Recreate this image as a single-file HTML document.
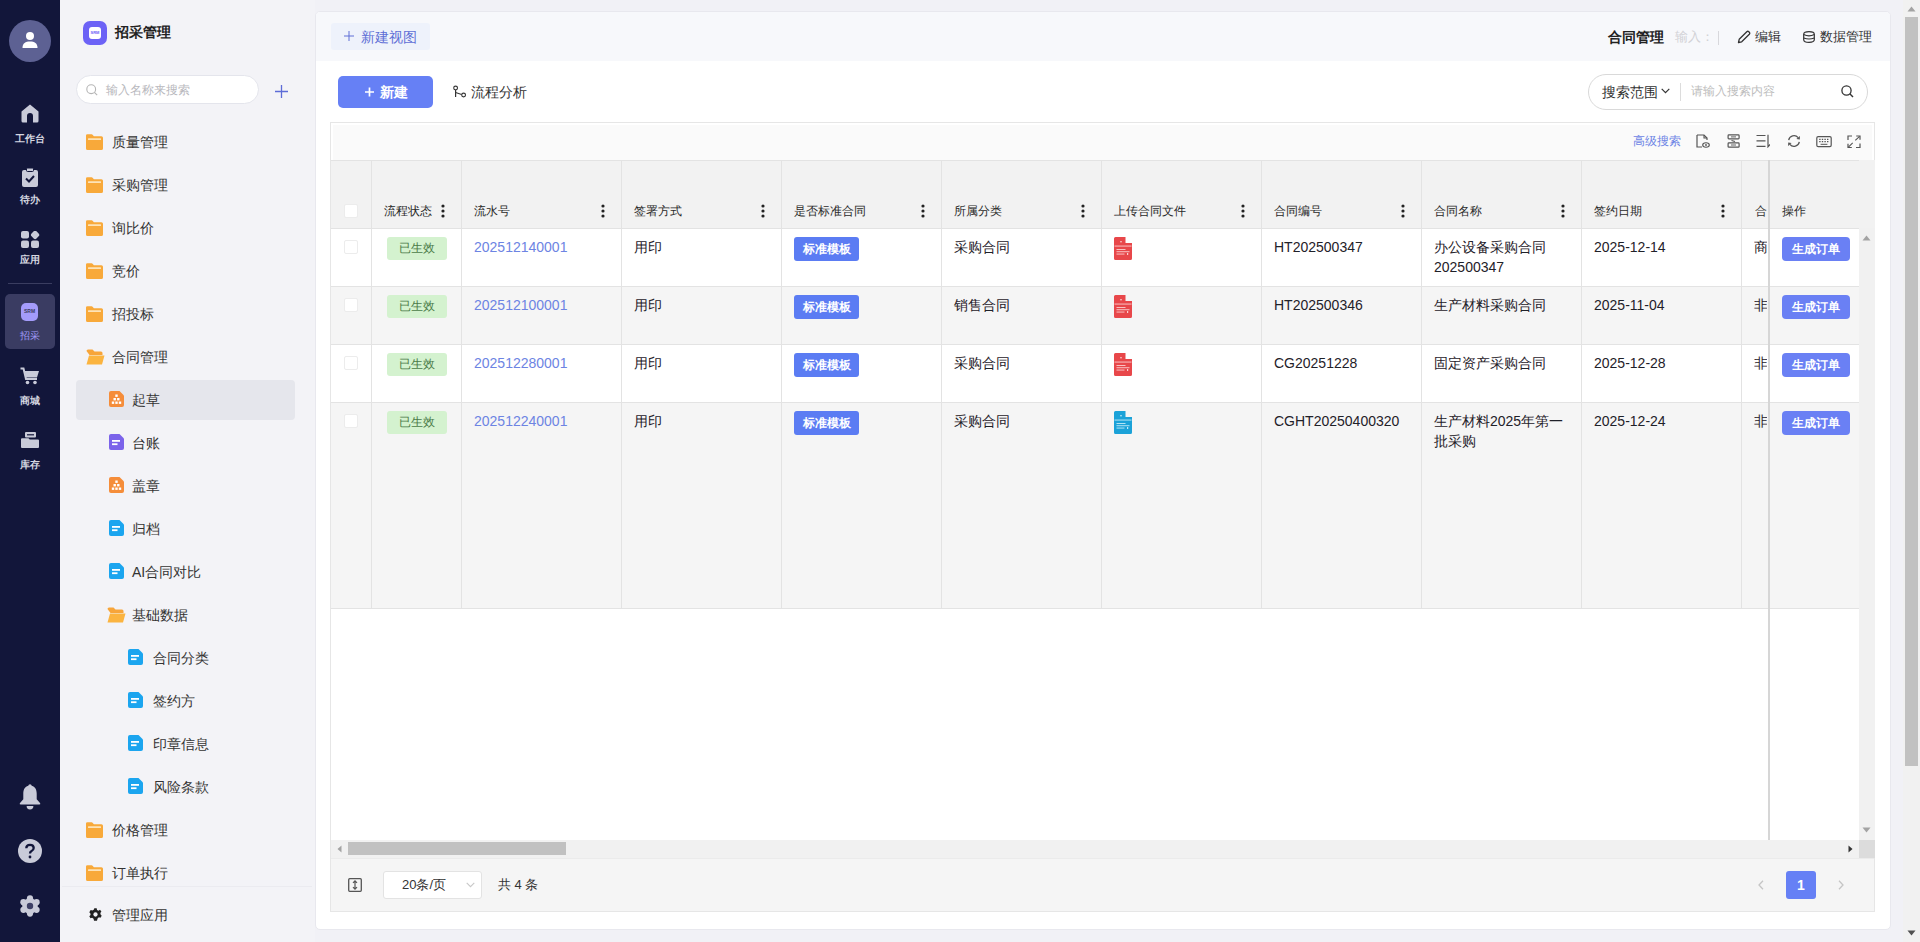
<!DOCTYPE html>
<html><head><meta charset="utf-8">
<style>
*{box-sizing:border-box;margin:0;padding:0}
html,body{width:1920px;height:942px;overflow:hidden}
body{font-family:"Liberation Sans",sans-serif;background:#f1f1f6;position:relative;color:#333}
.abs{position:absolute}
#nav{left:0;top:0;width:60px;height:942px;background:#12163a}
.navlbl{position:absolute;left:0;width:60px;text-align:center;font-size:10px;font-weight:bold;color:#d5d6e0;line-height:12px}
#side{left:60px;top:0;width:255px;height:942px;background:#f3f3f7}
.item{position:absolute;left:0;width:255px;height:20px;font-size:14px;line-height:20px;color:#333}
.item svg{position:absolute}
.item span{position:absolute;top:0}
#card{left:315px;top:11px;width:1575px;height:919px;background:#fff;border:1px solid #e6e6ec;border-radius:10px;overflow:hidden}
#hband{left:0;top:0;width:1575px;height:51px;background:#f7f8fb;border-bottom:1px solid #eff0f5}
#tbl{left:330px;top:122px;width:1545px;height:790px;border:1px solid #ebebeb;background:#fff}
.vl{position:absolute;width:1px;background:#e3e3e3}
.hl{position:absolute;height:1px;background:#e3e3e3}
.th{position:absolute;top:202px;font-size:12px;line-height:18px;color:#2a2a2a}
.dots{position:absolute;top:204px;width:4px;height:14px}
.td{position:absolute;font-size:14px;line-height:20px;color:#1f2129}
.tag{position:absolute;width:60px;height:23px;background:#d4f2cf;color:#4b7b48;font-size:12px;line-height:23px;text-align:center;border-radius:3px}
.btag{position:absolute;width:65px;height:24px;background:#5b7cf3;color:#fff;font-size:12px;font-weight:bold;line-height:24px;text-align:center;border-radius:3px}
.gbtn{position:absolute;left:1782px;width:68px;height:24px;background:#6a80f4;color:#fff;font-size:12px;font-weight:bold;line-height:24px;text-align:center;border-radius:4px}
.link{position:absolute;left:474px;font-size:14px;line-height:20px;color:#6d84e3}
.cb{position:absolute;left:344px;width:14px;height:14px;background:#fff;border:1px solid #ececec;border-radius:2px}
.ticon{position:absolute;top:134px}
</style></head><body>

<!-- left nav -->
<div id="nav" class="abs">
  <div class="abs" style="left:9px;top:20px;width:42px;height:42px;border-radius:50%;background:#5d6193"></div>
  <svg class="abs" style="left:21px;top:31px" width="18" height="18" viewBox="0 0 18 18"><circle cx="9" cy="5" r="4" fill="#fff"/><path d="M1.5 17 C1.5 12 4.5 10.5 9 10.5 C13.5 10.5 16.5 12 16.5 17 Z" fill="#fff"/></svg>

  <svg class="abs" style="left:21px;top:104px" width="18" height="19" viewBox="0 0 18 19"><path d="M9 0.5 L17.5 7.5 V17 Q17.5 18.5 16 18.5 H12 V12 Q12 9 9 9 Q6 9 6 12 V18.5 H2 Q0.5 18.5 0.5 17 V7.5 Z" fill="#c9cbd9"/></svg>
  <div class="navlbl" style="top:133px">工作台</div>

  <svg class="abs" style="left:22px;top:168px" width="16" height="19" viewBox="0 0 16 19"><rect x="0" y="2" width="16" height="17" rx="2" fill="#c9cbd9"/><rect x="4.5" y="0" width="7" height="3.5" rx="1" fill="#c9cbd9" stroke="#12163a" stroke-width="1"/><path d="M4 10.5 L7 13.5 L12 8" stroke="#12163a" stroke-width="2" fill="none"/></svg>
  <div class="navlbl" style="top:194px">待办</div>

  <svg class="abs" style="left:21px;top:231px" width="19" height="17" viewBox="0 0 19 17"><rect x="0" y="0" width="8" height="7.5" rx="2" fill="#c9cbd9"/><rect x="10.6" y="0.4" width="7" height="7" rx="2" transform="rotate(45 14.1 3.9)" fill="#c9cbd9"/><rect x="0" y="9.5" width="8" height="7.5" rx="2" fill="#c9cbd9"/><rect x="10" y="9.5" width="8" height="7.5" rx="2" fill="#c9cbd9"/></svg>
  <div class="navlbl" style="top:254px">应用</div>

  <div class="abs" style="left:8px;top:283px;width:44px;height:1px;background:#3a3d60"></div>
  <div class="abs" style="left:5px;top:294px;width:50px;height:55px;border-radius:5px;background:#3a3c62"></div>
  <div class="abs" style="left:21px;top:303px;width:17px;height:18px;border-radius:5px;background:#a49cfb"></div>
  <div class="abs" style="left:21px;top:308px;width:17px;text-align:center;font-size:5px;font-weight:bold;color:#3a3c62;line-height:7px">SRM</div>
  <div class="navlbl" style="top:330px;color:#9f98f6;font-weight:normal">招采</div>

  <svg class="abs" style="left:20px;top:367px" width="20" height="18" viewBox="0 0 20 18"><path d="M0.5 1.5 H3.5 L6 12 H17" stroke="#c9cbd9" stroke-width="2" fill="none"/><path d="M4.5 4 H19 L17 10.5 H6 Z" fill="#c9cbd9"/><circle cx="7.5" cy="15.5" r="1.8" fill="#c9cbd9"/><circle cx="15" cy="15.5" r="1.8" fill="#c9cbd9"/></svg>
  <div class="navlbl" style="top:395px">商城</div>

  <svg class="abs" style="left:21px;top:432px" width="18" height="16" viewBox="0 0 18 16"><rect x="4" y="0" width="11" height="5.5" rx="1" fill="#c9cbd9"/><rect x="6" y="2.2" width="7" height="1.2" fill="#12163a"/><path d="M0 7.2 Q0 6.2 1 6.2 H7.5 L8.7 7.6 H17 Q18 7.6 18 8.6 V15 Q18 16 17 16 H1 Q0 16 0 15 Z" fill="#c9cbd9"/></svg>
  <div class="navlbl" style="top:459px">库存</div>

  <svg class="abs" style="left:19px;top:784px" width="22" height="26" viewBox="0 0 22 26"><circle cx="11" cy="1.8" r="1.6" fill="#c9cbd9"/><path d="M11 1.5 C6.3 1.5 4.3 5.2 4.3 9.5 V15.2 L0.8 19.3 Q0.3 20.6 1.8 20.6 H20.2 Q21.7 20.6 21.2 19.3 L17.7 15.2 V9.5 C17.7 5.2 15.7 1.5 11 1.5 Z" fill="#c9cbd9"/><path d="M7.6 22 A3.4 3.4 0 0 0 14.4 22 Z" fill="#c9cbd9"/></svg>
  <svg class="abs" style="left:18px;top:839px" width="24" height="24" viewBox="0 0 24 24"><circle cx="12" cy="12" r="12" fill="#c9cbd9"/><path d="M8.3 9.2 Q8.3 5.8 12 5.8 Q15.7 5.8 15.7 9 Q15.7 11 13.3 12.2 Q12 12.9 12 14.6" stroke="#12163a" stroke-width="2.3" fill="none"/><circle cx="12" cy="18" r="1.4" fill="#12163a"/></svg>
  <svg class="abs" style="left:19px;top:895px" width="22" height="22" viewBox="0 0 22 22"><g fill="#c9cbd9"><circle cx="11" cy="11" r="7.8"/><circle cx="17.58" cy="14.80" r="3.1"/><circle cx="11.00" cy="18.60" r="3.1"/><circle cx="4.42" cy="14.80" r="3.1"/><circle cx="4.42" cy="7.20" r="3.1"/><circle cx="11.00" cy="3.40" r="3.1"/><circle cx="17.58" cy="7.20" r="3.1"/></g><circle cx="11" cy="11" r="3.2" fill="#3e4066"/></svg>
</div>

<!-- sidebar -->
<div id="side" class="abs">
  <div class="abs" style="left:23px;top:21px;width:24px;height:24px;border-radius:7px;background:#6c62f6"></div>
  <div class="abs" style="left:29px;top:27px;width:12px;height:12px;border-radius:3px;background:#fff"></div>
  <div class="abs" style="left:29px;top:30px;width:12px;text-align:center;font-size:4px;font-weight:bold;color:#6c62f6;line-height:5px">SRM</div>
  <div class="abs" style="left:55px;top:22px;font-size:14px;font-weight:bold;color:#222;line-height:20px">招采管理</div>

  <div class="abs" style="left:16px;top:75px;width:183px;height:29px;border-radius:15px;background:#fff;border:1px solid #e4e5ec"></div>
  <svg class="abs" style="left:26px;top:84px" width="12" height="12" viewBox="0 0 12 12"><circle cx="5.2" cy="5.2" r="4.4" stroke="#b5b5b5" stroke-width="1.1" fill="none"/><path d="M8.4 8.4 L11.2 11.2" stroke="#b5b5b5" stroke-width="1.1"/></svg>
  <div class="abs" style="left:46px;top:82px;font-size:12px;color:#b8b8bd;line-height:17px">输入名称来搜索</div>
  <svg class="abs" style="left:215px;top:85px" width="13" height="13" viewBox="0 0 13 13"><path d="M6.5 0 V13 M0 6.5 H13" stroke="#5d6cd7" stroke-width="1.3"/></svg>

  <div class="abs" style="left:16px;top:380px;width:219px;height:40px;border-radius:4px;background:#e5e6ec"></div>
</div>

<svg class="abs" style="left:86px;top:134px" width="17" height="16" viewBox="0 0 17 16"><path d="M0 1.6 Q0 0.3 1.4 0.3 H5.6 Q6.3 0.3 6.8 0.9 L7.9 2.2 H15.4 Q17 2.2 17 3.8 V14.4 Q17 16 15.4 16 H1.6 Q0 16 0 14.4 Z" fill="#f8a93a"/><rect x="2" y="4.3" width="13" height="1.6" rx="0.5" fill="#fde3b8"/></svg>
<div class="abs" style="left:112px;top:132px;font-size:14px;line-height:20px;color:#333">质量管理</div>
<svg class="abs" style="left:86px;top:177px" width="17" height="16" viewBox="0 0 17 16"><path d="M0 1.6 Q0 0.3 1.4 0.3 H5.6 Q6.3 0.3 6.8 0.9 L7.9 2.2 H15.4 Q17 2.2 17 3.8 V14.4 Q17 16 15.4 16 H1.6 Q0 16 0 14.4 Z" fill="#f8a93a"/><rect x="2" y="4.3" width="13" height="1.6" rx="0.5" fill="#fde3b8"/></svg>
<div class="abs" style="left:112px;top:175px;font-size:14px;line-height:20px;color:#333">采购管理</div>
<svg class="abs" style="left:86px;top:220px" width="17" height="16" viewBox="0 0 17 16"><path d="M0 1.6 Q0 0.3 1.4 0.3 H5.6 Q6.3 0.3 6.8 0.9 L7.9 2.2 H15.4 Q17 2.2 17 3.8 V14.4 Q17 16 15.4 16 H1.6 Q0 16 0 14.4 Z" fill="#f8a93a"/><rect x="2" y="4.3" width="13" height="1.6" rx="0.5" fill="#fde3b8"/></svg>
<div class="abs" style="left:112px;top:218px;font-size:14px;line-height:20px;color:#333">询比价</div>
<svg class="abs" style="left:86px;top:263px" width="17" height="16" viewBox="0 0 17 16"><path d="M0 1.6 Q0 0.3 1.4 0.3 H5.6 Q6.3 0.3 6.8 0.9 L7.9 2.2 H15.4 Q17 2.2 17 3.8 V14.4 Q17 16 15.4 16 H1.6 Q0 16 0 14.4 Z" fill="#f8a93a"/><rect x="2" y="4.3" width="13" height="1.6" rx="0.5" fill="#fde3b8"/></svg>
<div class="abs" style="left:112px;top:261px;font-size:14px;line-height:20px;color:#333">竞价</div>
<svg class="abs" style="left:86px;top:306px" width="17" height="16" viewBox="0 0 17 16"><path d="M0 1.6 Q0 0.3 1.4 0.3 H5.6 Q6.3 0.3 6.8 0.9 L7.9 2.2 H15.4 Q17 2.2 17 3.8 V14.4 Q17 16 15.4 16 H1.6 Q0 16 0 14.4 Z" fill="#f8a93a"/><rect x="2" y="4.3" width="13" height="1.6" rx="0.5" fill="#fde3b8"/></svg>
<div class="abs" style="left:112px;top:304px;font-size:14px;line-height:20px;color:#333">招投标</div>
<svg class="abs" style="left:86px;top:349px" width="19" height="16" viewBox="0 0 19 16"><path d="M0.5 2 Q0.5 0.5 2 0.5 H6.5 L8.5 2.5 H15 Q16.5 2.5 16.5 4 V6 H3.5 Z" fill="#f7a53a"/><path d="M3 6.5 H18.5 L16 15.5 H0.5 Z" fill="#fbb440"/></svg>
<div class="abs" style="left:112px;top:347px;font-size:14px;line-height:20px;color:#333">合同管理</div>
<svg class="abs" style="left:109px;top:391px" width="15" height="16" viewBox="0 0 15 16"><path d="M2 0 H10.5 L15 4.5 V14 Q15 16 13 16 H2 Q0 16 0 14 V2 Q0 0 2 0 Z" fill="#f58d3a"/><rect x="6.3" y="3.5" width="2.4" height="2.4" fill="#fff"/><rect x="4.5" y="7" width="2.4" height="2.4" fill="#fff"/><rect x="8.1" y="7" width="2.4" height="2.4" fill="#fff"/><rect x="2.8" y="10.5" width="2.4" height="2.4" fill="#fff"/><rect x="6.3" y="10.5" width="2.4" height="2.4" fill="#fff"/><rect x="9.8" y="10.5" width="2.4" height="2.4" fill="#fff"/></svg>
<div class="abs" style="left:132px;top:390px;font-size:14px;line-height:20px;color:#333">起草</div>
<svg class="abs" style="left:109px;top:434px" width="15" height="16" viewBox="0 0 15 16"><path d="M2 0 H10.5 L15 4.5 V14 Q15 16 13 16 H2 Q0 16 0 14 V2 Q0 0 2 0 Z" fill="#7b63ea"/><rect x="3" y="6" width="8" height="1.8" fill="#fff"/><rect x="3" y="9.3" width="5.5" height="1.8" fill="#fff"/></svg>
<div class="abs" style="left:132px;top:433px;font-size:14px;line-height:20px;color:#333">台账</div>
<svg class="abs" style="left:109px;top:477px" width="15" height="16" viewBox="0 0 15 16"><path d="M2 0 H10.5 L15 4.5 V14 Q15 16 13 16 H2 Q0 16 0 14 V2 Q0 0 2 0 Z" fill="#f58d3a"/><rect x="6.3" y="3.5" width="2.4" height="2.4" fill="#fff"/><rect x="4.5" y="7" width="2.4" height="2.4" fill="#fff"/><rect x="8.1" y="7" width="2.4" height="2.4" fill="#fff"/><rect x="2.8" y="10.5" width="2.4" height="2.4" fill="#fff"/><rect x="6.3" y="10.5" width="2.4" height="2.4" fill="#fff"/><rect x="9.8" y="10.5" width="2.4" height="2.4" fill="#fff"/></svg>
<div class="abs" style="left:132px;top:476px;font-size:14px;line-height:20px;color:#333">盖章</div>
<svg class="abs" style="left:109px;top:520px" width="15" height="16" viewBox="0 0 15 16"><path d="M2 0 H10.5 L15 4.5 V14 Q15 16 13 16 H2 Q0 16 0 14 V2 Q0 0 2 0 Z" fill="#1ba5ef"/><rect x="3" y="6" width="8" height="1.8" fill="#fff"/><rect x="3" y="9.3" width="5.5" height="1.8" fill="#fff"/></svg>
<div class="abs" style="left:132px;top:519px;font-size:14px;line-height:20px;color:#333">归档</div>
<svg class="abs" style="left:109px;top:563px" width="15" height="16" viewBox="0 0 15 16"><path d="M2 0 H10.5 L15 4.5 V14 Q15 16 13 16 H2 Q0 16 0 14 V2 Q0 0 2 0 Z" fill="#1ba5ef"/><rect x="3" y="6" width="8" height="1.8" fill="#fff"/><rect x="3" y="9.3" width="5.5" height="1.8" fill="#fff"/></svg>
<div class="abs" style="left:132px;top:562px;font-size:14px;line-height:20px;color:#333">AI合同对比</div>
<svg class="abs" style="left:107px;top:607px" width="19" height="16" viewBox="0 0 19 16"><path d="M0.5 2 Q0.5 0.5 2 0.5 H6.5 L8.5 2.5 H15 Q16.5 2.5 16.5 4 V6 H3.5 Z" fill="#f7a53a"/><path d="M3 6.5 H18.5 L16 15.5 H0.5 Z" fill="#fbb440"/></svg>
<div class="abs" style="left:132px;top:605px;font-size:14px;line-height:20px;color:#333">基础数据</div>
<svg class="abs" style="left:128px;top:649px" width="15" height="16" viewBox="0 0 15 16"><path d="M2 0 H10.5 L15 4.5 V14 Q15 16 13 16 H2 Q0 16 0 14 V2 Q0 0 2 0 Z" fill="#1ba5ef"/><rect x="3" y="6" width="8" height="1.8" fill="#fff"/><rect x="3" y="9.3" width="5.5" height="1.8" fill="#fff"/></svg>
<div class="abs" style="left:153px;top:648px;font-size:14px;line-height:20px;color:#333">合同分类</div>
<svg class="abs" style="left:128px;top:692px" width="15" height="16" viewBox="0 0 15 16"><path d="M2 0 H10.5 L15 4.5 V14 Q15 16 13 16 H2 Q0 16 0 14 V2 Q0 0 2 0 Z" fill="#1ba5ef"/><rect x="3" y="6" width="8" height="1.8" fill="#fff"/><rect x="3" y="9.3" width="5.5" height="1.8" fill="#fff"/></svg>
<div class="abs" style="left:153px;top:691px;font-size:14px;line-height:20px;color:#333">签约方</div>
<svg class="abs" style="left:128px;top:735px" width="15" height="16" viewBox="0 0 15 16"><path d="M2 0 H10.5 L15 4.5 V14 Q15 16 13 16 H2 Q0 16 0 14 V2 Q0 0 2 0 Z" fill="#1ba5ef"/><rect x="3" y="6" width="8" height="1.8" fill="#fff"/><rect x="3" y="9.3" width="5.5" height="1.8" fill="#fff"/></svg>
<div class="abs" style="left:153px;top:734px;font-size:14px;line-height:20px;color:#333">印章信息</div>
<svg class="abs" style="left:128px;top:778px" width="15" height="16" viewBox="0 0 15 16"><path d="M2 0 H10.5 L15 4.5 V14 Q15 16 13 16 H2 Q0 16 0 14 V2 Q0 0 2 0 Z" fill="#1ba5ef"/><rect x="3" y="6" width="8" height="1.8" fill="#fff"/><rect x="3" y="9.3" width="5.5" height="1.8" fill="#fff"/></svg>
<div class="abs" style="left:153px;top:777px;font-size:14px;line-height:20px;color:#333">风险条款</div>
<svg class="abs" style="left:86px;top:822px" width="17" height="16" viewBox="0 0 17 16"><path d="M0 1.6 Q0 0.3 1.4 0.3 H5.6 Q6.3 0.3 6.8 0.9 L7.9 2.2 H15.4 Q17 2.2 17 3.8 V14.4 Q17 16 15.4 16 H1.6 Q0 16 0 14.4 Z" fill="#f8a93a"/><rect x="2" y="4.3" width="13" height="1.6" rx="0.5" fill="#fde3b8"/></svg>
<div class="abs" style="left:112px;top:820px;font-size:14px;line-height:20px;color:#333">价格管理</div>
<svg class="abs" style="left:86px;top:865px" width="17" height="16" viewBox="0 0 17 16"><path d="M0 1.6 Q0 0.3 1.4 0.3 H5.6 Q6.3 0.3 6.8 0.9 L7.9 2.2 H15.4 Q17 2.2 17 3.8 V14.4 Q17 16 15.4 16 H1.6 Q0 16 0 14.4 Z" fill="#f8a93a"/><rect x="2" y="4.3" width="13" height="1.6" rx="0.5" fill="#fde3b8"/></svg>
<div class="abs" style="left:112px;top:863px;font-size:14px;line-height:20px;color:#333">订单执行</div>
<div class="abs" style="left:62px;top:886px;width:250px;height:1px;background:#ebebf0"></div>
<svg class="abs" style="left:89px;top:908px" width="13" height="13" viewBox="0 0 22 22"><path d="M9 0.5 H13 L13.6 3.3 L16 4.5 L18.6 3 L21 6 L19.2 8.3 L19.6 11 L21.5 13 L19.5 16.4 L16.7 15.8 L14.5 17.8 L13.5 21.5 H8.5 L7.7 18 L5.3 16.5 L2.5 17.3 L0.5 14 L2.6 11.8 L2.4 9.2 L0.5 7 L2.8 3.5 L5.8 4.4 L8 3 Z" fill="#222"/><circle cx="11" cy="11" r="3.6" fill="#f3f3f7"/></svg>
<div class="abs" style="left:112px;top:905px;font-size:14px;line-height:20px;color:#333">管理应用</div>
<div class="abs" style="left:315px;top:11px;width:1576px;height:919px;background:#fff;border:1px solid #e8e8ee;border-radius:5px;overflow:hidden"><div class="abs" style="left:0;top:0;width:1576px;height:49px;background:#f7f8fb"></div></div>
<div class="abs" style="left:331px;top:23px;width:99px;height:27px;background:#eef2fb;border-radius:3px"></div>
<svg class="abs" style="left:344px;top:31px" width="10" height="10" viewBox="0 0 10 10"><path d="M5 0 V10 M0 5 H10" stroke="#5f6fd6" stroke-width="1"/></svg>
<div class="abs" style="left:361px;top:27px;font-size:14px;line-height:20px;color:#5f6fd6">新建视图</div>
<div class="abs" style="left:1608px;top:27px;font-size:14px;line-height:20px;color:#222;font-weight:bold">合同管理</div>
<div class="abs" style="left:1675px;top:28px;font-size:13px;line-height:18px;color:#d2d2d6">输入：</div>
<div class="abs" style="left:1718px;top:31px;width:1px;height:14px;background:#d8d8dc"></div>
<svg class="abs" style="left:1737px;top:30px" width="14" height="14" viewBox="0 0 14 14"><path d="M1.5 12.5 L2.2 9.3 L9.8 1.7 Q10.8 0.8 11.8 1.7 L12.3 2.2 Q13.2 3.2 12.3 4.2 L4.7 11.8 Z" stroke="#333" stroke-width="1.3" fill="none" stroke-linejoin="round"/></svg>
<div class="abs" style="left:1755px;top:28px;font-size:13px;line-height:18px;color:#333">编辑</div>
<svg class="abs" style="left:1803px;top:31px" width="12" height="12" viewBox="0 0 12 12"><path d="M0.7 3.2 Q0.7 0.7 6 0.7 Q11.3 0.7 11.3 3.2 V8.8 Q11.3 11.3 6 11.3 Q0.7 11.3 0.7 8.8 Z" stroke="#333" stroke-width="1.2" fill="none"/><path d="M0.7 3.6 Q6 6.2 11.3 3.6 M0.7 6.9 Q6 9 11.3 6.9" stroke="#333" stroke-width="1.1" fill="none"/></svg>
<div class="abs" style="left:1820px;top:28px;font-size:13px;line-height:18px;color:#333">数据管理</div>
<div class="abs" style="left:338px;top:76px;width:95px;height:32px;background:#6680f5;border-radius:5px"></div>
<svg class="abs" style="left:364px;top:87px" width="11" height="10" viewBox="0 0 11 10"><path d="M5.5 0.5 V9.5 M1 5 H10" stroke="#fff" stroke-width="1.7"/></svg>
<div class="abs" style="left:380px;top:82px;font-size:14px;line-height:20px;color:#fff;font-weight:bold">新建</div>
<svg class="abs" style="left:452px;top:85px" width="15" height="13" viewBox="0 0 15 13"><circle cx="3.6" cy="3" r="1.9" stroke="#333" stroke-width="1.1" fill="none"/><path d="M3.6 4.9 V12" stroke="#333" stroke-width="1.2"/><path d="M3.6 7.6 L9.6 9.6" stroke="#333" stroke-width="1.1"/><circle cx="11.6" cy="10" r="1.9" stroke="#333" stroke-width="1.1" fill="none"/></svg>
<div class="abs" style="left:471px;top:82px;font-size:14px;line-height:20px;color:#333">流程分析</div>
<div class="abs" style="left:1588px;top:74px;width:280px;height:36px;border:1px solid #d9d9d9;border-radius:18px;background:#fff"></div>
<div class="abs" style="left:1602px;top:82px;font-size:14px;line-height:20px;color:#333">搜索范围</div>
<svg class="abs" style="left:1661px;top:88px" width="9" height="6" viewBox="0 0 9 6"><path d="M0.7 0.8 L4.5 4.6 L8.3 0.8" stroke="#333" stroke-width="1.2" fill="none"/></svg>
<div class="abs" style="left:1680px;top:83px;width:1px;height:18px;background:#dcdcdc"></div>
<div class="abs" style="left:1691px;top:83px;font-size:12px;line-height:17px;color:#bdbdbd">请输入搜索内容</div>
<svg class="abs" style="left:1841px;top:85px" width="13" height="13" viewBox="0 0 13 13"><circle cx="5.5" cy="5.5" r="4.6" stroke="#333" stroke-width="1.3" fill="none"/><path d="M8.8 8.8 L12 12" stroke="#333" stroke-width="1.4"/></svg>
<div class="abs" style="left:330px;top:122px;width:1545px;height:790px;background:#fff;border:1px solid #e6e6e6"></div>
<div class="abs" style="left:333px;top:125px;width:1539px;height:35px;background:#fafafa"></div>
<div class="abs" style="left:1633px;top:133px;font-size:12px;line-height:17px;color:#6d84e5">高级搜索</div>
<svg class="abs" style="left:1696px;top:134px" width="14" height="14" viewBox="0 0 14 14"><path d="M1 1 H8 L11 4 V6" stroke="#555" stroke-width="1.2" fill="none"/><path d="M1 1 V13 H6" stroke="#555" stroke-width="1.2" fill="none"/><path d="M8 1 V4 H11" stroke="#555" stroke-width="1.1" fill="none"/><ellipse cx="10" cy="11" rx="3.3" ry="2.2" stroke="#555" stroke-width="1.1" fill="none"/><circle cx="10" cy="11" r="0.9" fill="#555"/></svg>
<svg class="abs" style="left:1726px;top:134px" width="14" height="14" viewBox="0 0 14 14"><rect x="2.1" y="0.9" width="11" height="4" rx="0.8" stroke="#555" stroke-width="1.2" fill="none"/><rect x="2.1" y="8.9" width="11" height="4.3" rx="0.8" stroke="#555" stroke-width="1.2" fill="none"/><path d="M5 2.9 H10 M5 11 H10" stroke="#555" stroke-width="0.9"/><path d="M5.5 6.4 L9 7.6" stroke="#555" stroke-width="1.1"/></svg>
<svg class="abs" style="left:1756px;top:134px" width="14" height="14" viewBox="0 0 14 14"><path d="M0.5 1.5 H9.5 M0.5 6.8 H9.5 M0.5 12.3 H9.5" stroke="#555" stroke-width="1.2"/><path d="M12 0.8 V12.8 L14 10.5" stroke="#555" stroke-width="1.2" fill="none"/></svg>
<svg class="abs" style="left:1787px;top:134px" width="14" height="14" viewBox="0 0 14 14"><path d="M1.68 6.06 A5.4 5.4 0 0 1 11.14 3.53 M12.32 7.94 A5.4 5.4 0 0 1 2.86 10.47" stroke="#555" stroke-width="1.25" fill="none"/><path d="M12.81 5.52 L12.90 2.05 L9.37 5.01 Z M1.19 8.48 L1.10 11.95 L4.63 8.99 Z" fill="#555"/></svg>
<svg class="abs" style="left:1816px;top:135px" width="16" height="14" viewBox="0 0 16 14"><rect x="0.8" y="1.6" width="14.4" height="10" rx="1.4" stroke="#555" stroke-width="1.2" fill="none"/><path d="M3.2 4.3 H4.6 M5.8 4.3 H7.2 M8.4 4.3 H9.8 M11 4.3 H12.4 M3.2 6.6 H4.6 M5.8 6.6 H7.2 M8.4 6.6 H9.8 M11 6.6 H12.4" stroke="#555" stroke-width="1.2"/><path d="M4.6 9.3 H11.4" stroke="#555" stroke-width="1"/></svg>
<svg class="abs" style="left:1847px;top:135px" width="14" height="14" viewBox="0 0 14 14"><path d="M1 5 V1 H5 M13 8.5 V12.5 H9 M9.2 1 H13 V4.8 M1 8.7 V12.5 H4.8" stroke="#555" stroke-width="1.2" fill="none"/><path d="M8.3 5.4 L12.6 1.4 M5.7 7.9 L1.4 12.1" stroke="#555" stroke-width="1.1"/></svg>
<div class="abs" style="left:331px;top:160px;width:1544px;height:68px;background:#f2f2f2"></div>
<div class="abs" style="left:331px;top:228px;width:1528px;height:58px;background:#fff"></div>
<div class="abs" style="left:331px;top:286px;width:1528px;height:58px;background:#f5f5f5"></div>
<div class="abs" style="left:331px;top:344px;width:1528px;height:58px;background:#fff"></div>
<div class="abs" style="left:331px;top:402px;width:1528px;height:206px;background:#f5f5f5"></div>
<div class="hl" style="left:331px;top:160px;width:1528px"></div>
<div class="hl" style="left:331px;top:228px;width:1528px"></div>
<div class="hl" style="left:331px;top:286px;width:1528px"></div>
<div class="hl" style="left:331px;top:344px;width:1528px"></div>
<div class="hl" style="left:331px;top:402px;width:1528px"></div>
<div class="hl" style="left:331px;top:608px;width:1528px"></div>
<div class="vl" style="left:371px;top:160px;height:448px"></div>
<div class="vl" style="left:461px;top:160px;height:448px"></div>
<div class="vl" style="left:621px;top:160px;height:448px"></div>
<div class="vl" style="left:781px;top:160px;height:448px"></div>
<div class="vl" style="left:941px;top:160px;height:448px"></div>
<div class="vl" style="left:1101px;top:160px;height:448px"></div>
<div class="vl" style="left:1261px;top:160px;height:448px"></div>
<div class="vl" style="left:1421px;top:160px;height:448px"></div>
<div class="vl" style="left:1581px;top:160px;height:448px"></div>
<div class="vl" style="left:1741px;top:160px;height:448px"></div>
<div class="abs" style="left:1768px;top:160px;width:2px;height:680px;background:#d6d6d6"></div>
<div class="abs" style="left:1859px;top:228px;width:16px;height:612px;background:#f1f1f1"></div>
<svg class="abs" style="left:1862px;top:235px" width="9" height="6" viewBox="0 0 9 6"><path d="M0.5 5.5 L4.5 0.5 L8.5 5.5 Z" fill="#a3a3a3"/></svg>
<svg class="abs" style="left:1862px;top:827px" width="9" height="6" viewBox="0 0 9 6"><path d="M0.5 0.5 L4.5 5.5 L8.5 0.5 Z" fill="#a3a3a3"/></svg>
<div class="th" style="left:384px">流程状态</div>
<svg class="dots" style="left:441px" viewBox="0 0 4 14"><circle cx="2" cy="2" r="1.6" fill="#222"/><circle cx="2" cy="7" r="1.6" fill="#222"/><circle cx="2" cy="12" r="1.6" fill="#222"/></svg>
<div class="th" style="left:474px">流水号</div>
<svg class="dots" style="left:601px" viewBox="0 0 4 14"><circle cx="2" cy="2" r="1.6" fill="#222"/><circle cx="2" cy="7" r="1.6" fill="#222"/><circle cx="2" cy="12" r="1.6" fill="#222"/></svg>
<div class="th" style="left:634px">签署方式</div>
<svg class="dots" style="left:761px" viewBox="0 0 4 14"><circle cx="2" cy="2" r="1.6" fill="#222"/><circle cx="2" cy="7" r="1.6" fill="#222"/><circle cx="2" cy="12" r="1.6" fill="#222"/></svg>
<div class="th" style="left:794px">是否标准合同</div>
<svg class="dots" style="left:921px" viewBox="0 0 4 14"><circle cx="2" cy="2" r="1.6" fill="#222"/><circle cx="2" cy="7" r="1.6" fill="#222"/><circle cx="2" cy="12" r="1.6" fill="#222"/></svg>
<div class="th" style="left:954px">所属分类</div>
<svg class="dots" style="left:1081px" viewBox="0 0 4 14"><circle cx="2" cy="2" r="1.6" fill="#222"/><circle cx="2" cy="7" r="1.6" fill="#222"/><circle cx="2" cy="12" r="1.6" fill="#222"/></svg>
<div class="th" style="left:1114px">上传合同文件</div>
<svg class="dots" style="left:1241px" viewBox="0 0 4 14"><circle cx="2" cy="2" r="1.6" fill="#222"/><circle cx="2" cy="7" r="1.6" fill="#222"/><circle cx="2" cy="12" r="1.6" fill="#222"/></svg>
<div class="th" style="left:1274px">合同编号</div>
<svg class="dots" style="left:1401px" viewBox="0 0 4 14"><circle cx="2" cy="2" r="1.6" fill="#222"/><circle cx="2" cy="7" r="1.6" fill="#222"/><circle cx="2" cy="12" r="1.6" fill="#222"/></svg>
<div class="th" style="left:1434px">合同名称</div>
<svg class="dots" style="left:1561px" viewBox="0 0 4 14"><circle cx="2" cy="2" r="1.6" fill="#222"/><circle cx="2" cy="7" r="1.6" fill="#222"/><circle cx="2" cy="12" r="1.6" fill="#222"/></svg>
<div class="th" style="left:1594px">签约日期</div>
<svg class="dots" style="left:1721px" viewBox="0 0 4 14"><circle cx="2" cy="2" r="1.6" fill="#222"/><circle cx="2" cy="7" r="1.6" fill="#222"/><circle cx="2" cy="12" r="1.6" fill="#222"/></svg>
<div class="abs" style="left:1755px;top:202px;width:12px;overflow:hidden;font-size:12px;line-height:18px;color:#333;white-space:nowrap">合同</div>
<div class="th" style="left:1782px">操作</div>
<div class="cb" style="top:204px"></div>
<div class="cb" style="top:240px"></div>
<div class="tag" style="left:387px;top:237px">已生效</div>
<div class="link" style="top:237px">202512140001</div>
<div class="td" style="left:634px;top:237px">用印</div>
<div class="btag" style="left:794px;top:237px">标准模板</div>
<div class="td" style="left:954px;top:237px">采购合同</div>
<svg class="abs" style="left:1114px;top:237px" width="18" height="23" viewBox="0 0 18 23"><path d="M1.5 0 H11.5 V6 H18 V21.5 Q18 23 16.5 23 H1.5 Q0 23 0 21.5 V1.5 Q0 0 1.5 0 Z" fill="#e8474a"/><rect x="0.5" y="8.6" width="17" height="0.9" fill="#fbd0d0"/><rect x="2.5" y="12" width="9" height="0.9" fill="#fbd0d0"/><rect x="2.5" y="14.3" width="13" height="0.9" fill="#fbd0d0"/><rect x="2.5" y="16.6" width="8" height="0.9" fill="#fbd0d0"/><rect x="13" y="16" width="1.2" height="2" fill="#fbd0d0"/><rect x="6.3" y="4" width="1.4" height="1.4" fill="#fbd0d0"/></svg>
<div class="td" style="left:1274px;top:237px">HT202500347</div>
<div class="td" style="left:1434px;top:237px">办公设备采购合同<br>202500347</div>
<div class="td" style="left:1594px;top:237px">2025-12-14</div>
<div class="td" style="left:1754px;top:237px;width:13px;overflow:hidden">商</div>
<div class="gbtn" style="top:237px">生成订单</div>
<div class="cb" style="top:298px"></div>
<div class="tag" style="left:387px;top:295px">已生效</div>
<div class="link" style="top:295px">202512100001</div>
<div class="td" style="left:634px;top:295px">用印</div>
<div class="btag" style="left:794px;top:295px">标准模板</div>
<div class="td" style="left:954px;top:295px">销售合同</div>
<svg class="abs" style="left:1114px;top:295px" width="18" height="23" viewBox="0 0 18 23"><path d="M1.5 0 H11.5 V6 H18 V21.5 Q18 23 16.5 23 H1.5 Q0 23 0 21.5 V1.5 Q0 0 1.5 0 Z" fill="#e8474a"/><rect x="0.5" y="8.6" width="17" height="0.9" fill="#fbd0d0"/><rect x="2.5" y="12" width="9" height="0.9" fill="#fbd0d0"/><rect x="2.5" y="14.3" width="13" height="0.9" fill="#fbd0d0"/><rect x="2.5" y="16.6" width="8" height="0.9" fill="#fbd0d0"/><rect x="13" y="16" width="1.2" height="2" fill="#fbd0d0"/><rect x="6.3" y="4" width="1.4" height="1.4" fill="#fbd0d0"/></svg>
<div class="td" style="left:1274px;top:295px">HT202500346</div>
<div class="td" style="left:1434px;top:295px">生产材料采购合同</div>
<div class="td" style="left:1594px;top:295px">2025-11-04</div>
<div class="td" style="left:1754px;top:295px;width:13px;overflow:hidden">非</div>
<div class="gbtn" style="top:295px">生成订单</div>
<div class="cb" style="top:356px"></div>
<div class="tag" style="left:387px;top:353px">已生效</div>
<div class="link" style="top:353px">202512280001</div>
<div class="td" style="left:634px;top:353px">用印</div>
<div class="btag" style="left:794px;top:353px">标准模板</div>
<div class="td" style="left:954px;top:353px">采购合同</div>
<svg class="abs" style="left:1114px;top:353px" width="18" height="23" viewBox="0 0 18 23"><path d="M1.5 0 H11.5 V6 H18 V21.5 Q18 23 16.5 23 H1.5 Q0 23 0 21.5 V1.5 Q0 0 1.5 0 Z" fill="#e8474a"/><rect x="0.5" y="8.6" width="17" height="0.9" fill="#fbd0d0"/><rect x="2.5" y="12" width="9" height="0.9" fill="#fbd0d0"/><rect x="2.5" y="14.3" width="13" height="0.9" fill="#fbd0d0"/><rect x="2.5" y="16.6" width="8" height="0.9" fill="#fbd0d0"/><rect x="13" y="16" width="1.2" height="2" fill="#fbd0d0"/><rect x="6.3" y="4" width="1.4" height="1.4" fill="#fbd0d0"/></svg>
<div class="td" style="left:1274px;top:353px">CG20251228</div>
<div class="td" style="left:1434px;top:353px">固定资产采购合同</div>
<div class="td" style="left:1594px;top:353px">2025-12-28</div>
<div class="td" style="left:1754px;top:353px;width:13px;overflow:hidden">非</div>
<div class="gbtn" style="top:353px">生成订单</div>
<div class="cb" style="top:414px"></div>
<div class="tag" style="left:387px;top:411px">已生效</div>
<div class="link" style="top:411px">202512240001</div>
<div class="td" style="left:634px;top:411px">用印</div>
<div class="btag" style="left:794px;top:411px">标准模板</div>
<div class="td" style="left:954px;top:411px">采购合同</div>
<svg class="abs" style="left:1114px;top:411px" width="18" height="23" viewBox="0 0 18 23"><path d="M1.5 0 H11.5 V6 H18 V21.5 Q18 23 16.5 23 H1.5 Q0 23 0 21.5 V1.5 Q0 0 1.5 0 Z" fill="#1ba2d8"/><rect x="0.5" y="8.6" width="17" height="0.9" fill="#c4ebf8"/><rect x="2.5" y="12" width="9" height="0.9" fill="#c4ebf8"/><rect x="2.5" y="14.3" width="13" height="0.9" fill="#c4ebf8"/><rect x="2.5" y="16.6" width="8" height="0.9" fill="#c4ebf8"/><rect x="13" y="16" width="1.2" height="2" fill="#c4ebf8"/><rect x="6.3" y="4" width="1.4" height="1.4" fill="#c4ebf8"/></svg>
<div class="td" style="left:1274px;top:411px">CGHT20250400320</div>
<div class="td" style="left:1434px;top:411px">生产材料2025年第一<br>批采购</div>
<div class="td" style="left:1594px;top:411px">2025-12-24</div>
<div class="td" style="left:1754px;top:411px;width:13px;overflow:hidden">非</div>
<div class="gbtn" style="top:411px">生成订单</div>
<div class="abs" style="left:331px;top:840px;width:1528px;height:18px;background:#f1f1f1"></div>
<div class="abs" style="left:348px;top:842px;width:218px;height:13px;background:#c1c1c1"></div>
<svg class="abs" style="left:337px;top:845px" width="5" height="8" viewBox="0 0 5 8"><path d="M4.5 0.5 L0.5 4 L4.5 7.5 Z" fill="#a3a3a3"/></svg>
<svg class="abs" style="left:1848px;top:845px" width="5" height="8" viewBox="0 0 5 8"><path d="M0.5 0.5 L4.5 4 L0.5 7.5 Z" fill="#333"/></svg>
<div class="abs" style="left:1859px;top:840px;width:16px;height:18px;background:#dcdcdc"></div>
<div class="abs" style="left:331px;top:858px;width:1543px;height:53px;background:#f5f5f5;border-top:1px solid #ebebeb"></div>
<svg class="abs" style="left:348px;top:878px" width="14" height="14" viewBox="0 0 14 14"><rect x="0.7" y="0.7" width="12.6" height="12.6" rx="1" stroke="#555" stroke-width="1.3" fill="none"/><path d="M7 3 V11 M5 4.8 L7 2.8 L9 4.8 M5 9.2 L7 11.2 L9 9.2" stroke="#555" stroke-width="1.2" fill="none"/></svg>
<div class="abs" style="left:383px;top:871px;width:99px;height:28px;background:#fff;border:1px solid #e3e3e3;border-radius:3px"></div>
<div class="abs" style="left:402px;top:876px;font-size:13px;line-height:18px;color:#333">20条/页</div>
<svg class="abs" style="left:466px;top:882px" width="9" height="6" viewBox="0 0 9 6"><path d="M0.7 0.8 L4.5 4.6 L8.3 0.8" stroke="#c8c8c8" stroke-width="1.1" fill="none"/></svg>
<div class="abs" style="left:498px;top:876px;font-size:13px;line-height:18px;color:#333">共 4 条</div>
<svg class="abs" style="left:1758px;top:880px" width="6" height="10" viewBox="0 0 6 10"><path d="M5 0.8 L1 5 L5 9.2" stroke="#c5c5c5" stroke-width="1.3" fill="none"/></svg>
<div class="abs" style="left:1786px;top:871px;width:30px;height:28px;background:#6680f5;border-radius:3px;color:#fff;font-size:14px;font-weight:bold;line-height:28px;text-align:center">1</div>
<svg class="abs" style="left:1838px;top:880px" width="6" height="10" viewBox="0 0 6 10"><path d="M1 0.8 L5 5 L1 9.2" stroke="#c5c5c5" stroke-width="1.3" fill="none"/></svg>
<div class="abs" style="left:1903px;top:0;width:17px;height:942px;background:#f1f1f1"></div>
<div class="abs" style="left:1905px;top:17px;width:13px;height:749px;background:#c1c1c1"></div>
<svg class="abs" style="left:1907px;top:6px" width="9" height="6" viewBox="0 0 9 6"><path d="M0.5 5.5 L4.5 0.5 L8.5 5.5 Z" fill="#a3a3a3"/></svg>
<svg class="abs" style="left:1907px;top:930px" width="9" height="6" viewBox="0 0 9 6"><path d="M0.5 0.5 L4.5 5.5 L8.5 0.5 Z" fill="#505050"/></svg>
</body></html>
